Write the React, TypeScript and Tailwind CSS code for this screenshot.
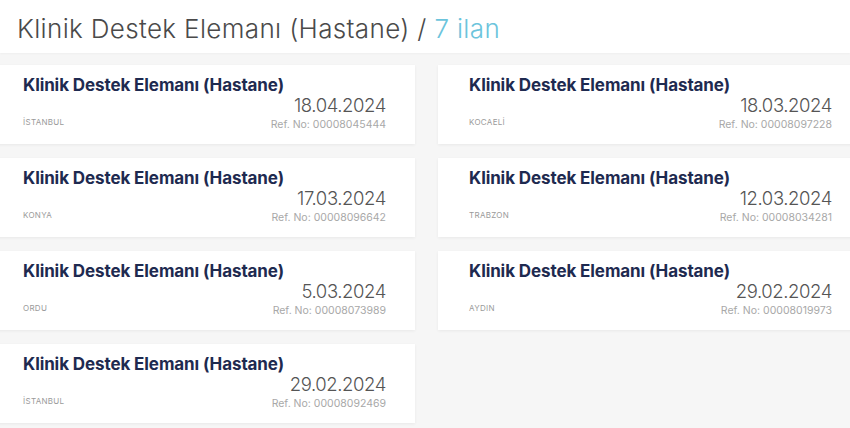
const jobs = [
  { city: "İSTANBUL", date: "18.04.2024", ref: "00008045444" },
  { city: "KOCAELİ", date: "18.03.2024", ref: "00008097228" },
  { city: "KONYA", date: "17.03.2024", ref: "00008096642" },
  { city: "TRABZON", date: "12.03.2024", ref: "00008034281" },
  { city: "ORDU", date: "5.03.2024", ref: "00008073989" },
  { city: "AYDIN", date: "29.02.2024", ref: "00008019973" },
  { city: "İSTANBUL", date: "29.02.2024", ref: "00008092469" },
];

function JobCard({ city, date, ref }: { city: string; date: string; ref: string }) {
  return (
    <div className="bg-white h-[79px] pl-[31px] pr-[29px] pt-[9px] shadow-[0_1px_3px_rgba(0,0,0,0.06)]">
      <div className="text-[17px] leading-[22px] font-bold text-[#1e2a50] tracking-[-0.1px]">
        Klinik Destek Elemanı (Hastane)
      </div>
      <div className="flex justify-between items-end -mt-[1px]">
        <div className="text-[8px] text-[#9a9a9a] tracking-[0.3px] mb-[4px]">{city}</div>
        <div className="flex flex-col items-end">
          <div className="text-[18.5px] leading-[21px] font-light text-[#555] tracking-[-0.4px]">{date}</div>
          <div className="text-[10.5px] leading-[14px] text-[#a8a8a8] mt-[2px]">Ref. No: {ref}</div>
        </div>
      </div>
    </div>
  );
}

export default function App() {
  return (
    <div className="w-[850px] h-[428px] overflow-hidden bg-[#f6f6f6] font-['Inter',sans-serif]">
      <div className="bg-white h-[53px] flex items-center pl-[17px] shadow-[0_1px_2px_rgba(0,0,0,0.03)]">
        <h1 className="text-[26px] font-light text-[#4a4a4a] tracking-[0.35px] pt-[4px]">
          Klinik Destek Elemanı (Hastane) / <span className="text-[#6cc4dc]">7 ilan</span>
        </h1>
      </div>
      <div className="grid grid-cols-[423px_423px] gap-x-[23px] gap-y-[14px] -ml-[8px] mt-[12px]">
        {jobs.map((j, i) => (
          <JobCard key={i} {...j} />
        ))}
      </div>
    </div>
  );
}
